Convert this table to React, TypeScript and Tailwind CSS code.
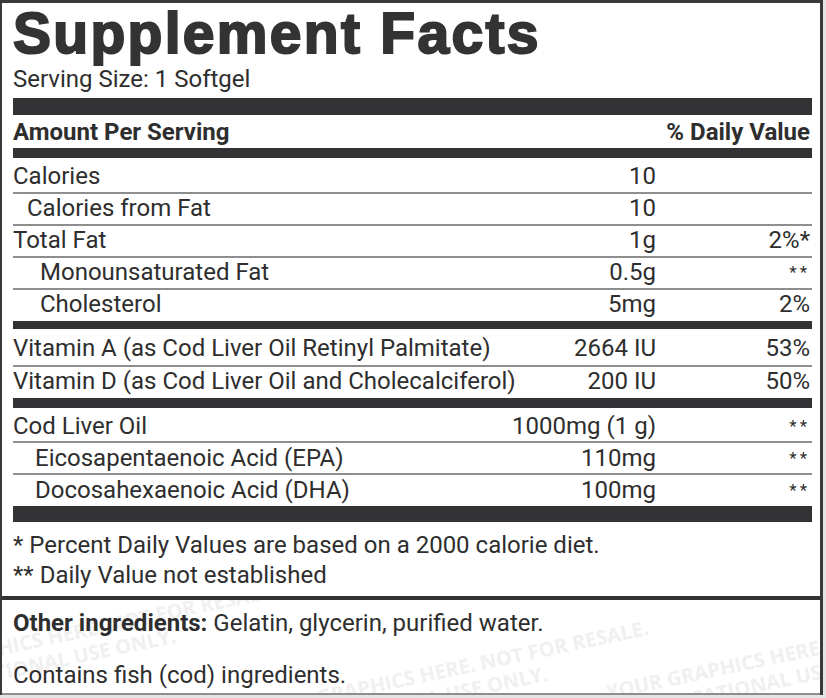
import clsx from 'clsx'

type Row = {
	label: string
	amount: string
	dv?: string
	indent?: string
	box: string
	after: 'line' | string
}

const fatRows: Row[] = [
	{ label: 'Calories', amount: '10', box: 'h-[34px] pt-[4px]', after: 'line' },
	{ label: 'Calories from Fat', amount: '10', indent: 'pl-[14px]', box: 'h-[30px]', after: 'line' },
	{ label: 'Total Fat', amount: '1g', dv: '2%*', box: 'h-[30px]', after: 'line' },
	{ label: 'Monounsaturated Fat', amount: '0.5g', dv: '**', indent: 'pl-[27px]', box: 'h-[30px]', after: 'line' },
	{ label: 'Cholesterol', amount: '5mg', dv: '2%', indent: 'pl-[27px]', box: 'h-[31px]', after: 'h-[8px]' },
]

const vitaminRows: Row[] = [
	{ label: 'Vitamin A (as Cod Liver Oil Retinyl Palmitate)', amount: '2664 IU', dv: '53%', box: 'h-[36px] pt-[5px]', after: 'line' },
	{ label: 'Vitamin D (as Cod Liver Oil and Cholecalciferol)', amount: '200 IU', dv: '50%', box: 'h-[31px]', after: 'h-[10px]' },
]

const oilRows: Row[] = [
	{ label: 'Cod Liver Oil', amount: '1000mg (1 g)', dv: '**', box: 'h-[33px] pt-[4px]', after: 'line' },
	{ label: 'Eicosapentaenoic Acid (EPA)', amount: '110mg', dv: '**', indent: 'pl-[22px]', box: 'h-[30px] pt-[1px]', after: 'line' },
	{ label: 'Docosahexaenoic Acid (DHA)', amount: '100mg', dv: '**', indent: 'pl-[22px]', box: 'h-[31px] pt-[1px]', after: 'h-[16px]' },
]

const Bar = ({ h }: { h: string }) => <div className={clsx('bg-[#333335]', h)}></div>

const FactRow = ({ row }: { row: Row }) => (
	<>
		<div className={clsx('flex leading-[28px]', row.box)}>
			<span className={clsx('flex-1 whitespace-nowrap', row.indent)}>{row.label}</span>
			<span className="whitespace-nowrap pr-[2px] text-right">{row.amount}</span>
			<span
				className={clsx(
					'w-[154px] whitespace-nowrap pr-[2px] text-right',
					row.dv === '**' && 'text-[17px] tracking-[3px]'
				)}
			>
				{row.dv}
			</span>
		</div>
		{row.after === 'line' ? <div className="h-[2px] bg-[#8e8e8e]"></div> : <Bar h={row.after} />}
	</>
)

// faint "not for resale" stamp behind the bottom panel
const Watermark = ({ className }: { className: string }) => (
	<div
		aria-hidden="true"
		className={clsx(
			'pointer-events-none absolute origin-bottom-left -rotate-12 select-none whitespace-nowrap font-["Open_Sans",sans-serif] text-[20px] font-bold leading-[24px] text-[#f0f0f0]',
			className
		)}
	>
		<p>YOUR GRAPHICS HERE. NOT FOR RESALE.</p>
		<p className="pl-[40px]">EDUCATIONAL USE ONLY.</p>
	</div>
)

const App = () => {
	return (
		<div className="h-[698px] w-[826px] bg-[#e4e4e4]">
			<div className="w-[823px] border-t-[3px] border-r-[3px] border-l-2 border-[#3a3a3a] bg-white font-[Roboto,sans-serif] text-[24px] text-[#2e2e2e]">
				<div className="pr-[8px] pl-[11px]">
					<h1 className="pt-[2px] font-['Liberation_Sans',Arial,sans-serif] text-[57px] leading-[57px] font-bold tracking-[2.3px] text-[#333] [-webkit-text-stroke:2px_#333]">
						Supplement Facts
					</h1>
					<p className="mt-[3px] leading-[28px]">Serving Size: 1 Softgel</p>
					<div className="mt-[5px]">
						<Bar h="h-[17px]" />
					</div>
					<div className="mt-[3px] flex justify-between leading-[28px] font-bold">
						<span>Amount Per Serving</span>
						<span className="pr-[2px]">% Daily Value</span>
					</div>
					<div className="mt-[2px]">
						<Bar h="h-[10px]" />
					</div>
					{fatRows.map((r) => (
						<FactRow key={r.label} row={r} />
					))}
					{vitaminRows.map((r) => (
						<FactRow key={r.label} row={r} />
					))}
					{oilRows.map((r) => (
						<FactRow key={r.label} row={r} />
					))}
					<div className="pt-[8px] leading-[30px]">
						<p>* Percent Daily Values are based on a 2000 calorie diet.</p>
						<p>** Daily Value not established</p>
					</div>
				</div>
				<div className="mt-[6px] h-[4px] bg-[#333335]"></div>
				<div className="relative overflow-hidden border-b-2 border-[#8e8e8e] pr-[8px] pb-[4px] pl-[11px]">
					<Watermark className="top-[60px] left-[-110px]" />
					<Watermark className="top-[98px] left-[262px]" />
					<Watermark className="top-[80px] left-[612px]" />
					<div className="relative">
						<p className="pt-[9px] leading-[28px]">
							<span className="font-bold">Other ingredients:</span> Gelatin, glycerin, purified water.
						</p>
						<p className="mt-[24px] leading-[28px]">Contains fish (cod) ingredients.</p>
					</div>
				</div>
			</div>
		</div>
	)
}

export default App
